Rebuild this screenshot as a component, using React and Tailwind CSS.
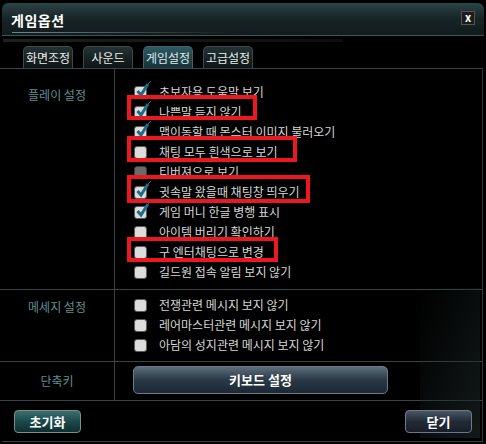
import React from 'react';

const FONT = { fontFamily: '"Noto Sans CJK KR", "Noto Sans", sans-serif' };

const playOptions = [
  { label: '초보자용 도움말 보기', state: 'on' },
  { label: '나쁜말 듣지 않기', state: 'on' },
  { label: '맵이동할 때 몬스터 이미지 불러오기', state: 'on' },
  { label: '채팅 모두 흰색으로 보기', state: 'off' },
  { label: '티버져으로 보기', state: 'disabled' },
  { label: '귓속말 왔을때 채팅창 띄우기', state: 'on' },
  { label: '게임 머니 한글 병행 표시', state: 'on' },
  { label: '아이템 버리기 확인하기', state: 'off' },
  { label: '구 엔터채팅으로 변경', state: 'off' },
  { label: '길드원 접속 알림 보지 않기', state: 'off' },
];

const messageOptions = [
  '전쟁관련 메시지 보지 않기',
  '레어마스터관련 메시지 보지 않기',
  '아담의 성지관련 메시지 보지 않기',
];

const tabs = ['화면조정', '사운드', '게임설정', '고급설정'];

const CheckBox = ({ state }) => (
  <span className="relative w-[13px] h-[13px] shrink-0">
    <span
      className={
        state === 'disabled'
          ? 'block w-full h-full rounded-[3px] bg-[#6a6a6a] border border-[#3a3a3a]'
          : 'block w-full h-full rounded-[3px] bg-[#dcdcdc] border border-[#5a5a5a]'
      }
    ></span>
    {state === 'on' && (
      <svg className="absolute -top-[6px] left-[1px]" width="18" height="18" viewBox="0 0 18 18">
        <path d="M2.5 11 L6 15 L13 4" stroke="#1b6c86" strokeWidth="3" fill="none" />
        <path d="M13 4 L16 1" stroke="#1b6c86" strokeWidth="1" fill="none" />
      </svg>
    )}
  </span>
);

const OptionRow = ({ label, state }) => (
  <div className="h-[20px] flex items-center">
    <CheckBox state={state} />
    <span className="ml-[12px] text-[12px] text-[#d6d6d6] leading-none whitespace-nowrap">{label}</span>
  </div>
);

const RedBox = ({ className }) => (
  <div className={`absolute border-[4px] border-[#ec1820] ${className}`}></div>
);

export default function App() {
  return (
    <div className="w-[486px] h-[444px] bg-black relative overflow-hidden" style={FONT}>
      {/* title bar */}
      <div className="mx-[2px] mt-[3px] h-[33px] rounded-t-[6px] bg-gradient-to-b from-[#2c4446] via-[#172426] to-[#131b1c] border-b border-[#3a5556] relative flex items-center px-[9px]">
        <span className="text-[14px] font-bold text-white tracking-[0.5px] mt-[2px]">게임옵션</span>
        <div className="absolute left-[10px] top-[29px] w-[220px] h-[1px] bg-gradient-to-r from-[#6a8a8a] to-transparent"></div>
        <div className="ml-auto w-[14px] h-[14px] bg-[#1c1c1c] border border-[#555] flex items-center justify-center -mt-[3px]">
          <span className="text-[11px] font-bold text-white leading-none">x</span>
        </div>
      </div>

      {/* strip */}
      <div className="h-[9px] flex items-center px-[3px]">
        <div className="w-[340px] h-[3px] bg-gradient-to-r from-[#1a2222] to-[#0a0e0e]"></div>
      </div>

      {/* tabs */}
      <div className="h-[23px] flex items-end gap-[10px] pl-[23px]">
        {tabs.map((t) => (
          <div
            key={t}
            className={
              t === '게임설정'
                ? 'w-[50px] h-[22px] rounded-t-[5px] border border-b-0 border-[#4a6064] bg-gradient-to-b from-[#2e5a62] to-[#163238] flex items-center justify-center text-[12px] text-[#dfe8ea]'
                : 'w-[50px] h-[22px] rounded-t-[5px] border border-b-0 border-[#3c4a4c] bg-gradient-to-b from-[#243234] to-[#0e1414] flex items-center justify-center text-[12px] text-[#e8eeee]'
            }
          >
            {t}
          </div>
        ))}
      </div>

      {/* body */}
      <div className="border-t border-[#3a4646] mr-[3px] relative">
        {/* play settings */}
        <div className="flex h-[221px] border-b border-[#3a4646]">
          <div className="w-[115px] border-r border-[#3a4646] pt-[17px] text-center text-[12px] text-[#5f8f92]">플레이 설정</div>
          <div className="pl-[19px] pt-[13px] relative">
            {playOptions.map((o) => (
              <OptionRow key={o.label} label={o.label} state={o.state} />
            ))}
          </div>
        </div>

        {/* message settings */}
        <div className="flex h-[72px] border-b border-[#3a4646]">
          <div className="w-[115px] border-r border-[#3a4646] pt-[8px] text-center text-[12px] text-[#5f8f92]">메세지 설정</div>
          <div className="pl-[19px] pt-[5px]">
            {messageOptions.map((m) => (
              <OptionRow key={m} label={m} state="off" />
            ))}
          </div>
        </div>

        {/* shortcut */}
        <div className="flex h-[39px] border-b border-[#3a4646]">
          <div className="w-[115px] border-r border-[#3a4646] flex items-center justify-center text-[12px] text-[#5f8f92]">단축키</div>
          <div className="pl-[18px] pt-[4px]">
            <button className="w-[255px] h-[28px] rounded-[5px] border border-[#6a7c88] bg-gradient-to-b from-[#5c6e7c] via-[#2a3846] to-[#1c2834] text-[13px] font-bold text-white">
              키보드 설정
            </button>
          </div>
        </div>

        {/* red highlight boxes */}
        <RedBox className="left-[127px] top-[26px] w-[130px] h-[25px]" />
        <RedBox className="left-[127px] top-[67px] w-[170px] h-[26px]" />
        <RedBox className="left-[127px] top-[106px] w-[183px] h-[28px]" />
        <RedBox className="left-[127px] top-[168px] w-[151px] h-[25px]" />
      </div>

      {/* decorative sheen bottom right */}
      <div className="absolute right-[6px] bottom-[6px] w-[60px] h-[150px] bg-gradient-to-tl from-[#1a2424]/70 to-transparent pointer-events-none"></div>

      {/* footer */}
      <div className="relative flex justify-between px-[14px] pt-[9px]">
        <button className="w-[67px] h-[23px] rounded-[4px] border border-[#7a8c8c] bg-gradient-to-b from-[#3a7070] via-[#1c4a4a] to-[#0e2e30] text-[13px] font-bold text-white">
          초기화
        </button>
        <button className="w-[67px] h-[23px] rounded-[4px] border border-[#6a7a88] bg-gradient-to-b from-[#4a5664] via-[#222c38] to-[#161e28] text-[13px] font-bold text-white">
          닫기
        </button>
      </div>
      <div className="absolute left-[2px] right-[3px] bottom-[2px] h-[1px] bg-[#3a4646]"></div>
      <div className="absolute right-[3px] top-[68px] bottom-[2px] w-[1px] bg-[#2e3838]"></div>
    </div>
  );
}
